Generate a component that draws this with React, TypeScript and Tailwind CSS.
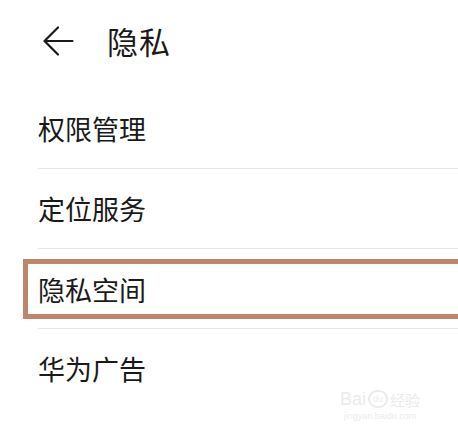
import React from "react";

const items = ["权限管理", "定位服务", "隐私空间", "华为广告"];

const font = { fontFamily: '"Noto Sans CJK SC", "Noto Sans", sans-serif' };

export default function App() {
  return (
    <div className="relative w-[458px] h-[435px] bg-white overflow-hidden text-[#1a1a1a]" style={font}>
      {/* header */}
      <div className="h-[89px] flex items-center pl-[43px] pb-[8px]">
        <svg width="31" height="30" viewBox="0 0 31 30" fill="none" stroke="#1a1a1a" strokeWidth="2.2" strokeLinecap="round" strokeLinejoin="round">
          <path d="M29.5 15H2" />
          <path d="M15 1.5L1.5 15L15 28.5" />
        </svg>
        <div className="ml-[33px] text-[31px] leading-none tracking-[1px]">隐私</div>
      </div>

      {/* list */}
      <div className="flex flex-col">
        {items.map((item, i) => (
          <div key={item} className="flex flex-col">
            {i === 2 ? (
              <div className="h-[79px] py-[10px] pl-[23px]">
                <div className="h-[60px] border-[5px] border-[#c0846a] -mr-[10px] pl-[10px] flex items-center text-[27px] leading-none">
                  {item}
                </div>
              </div>
            ) : (
              <div className="h-[79px] pl-[38px] flex items-center text-[27px] leading-none">{item}</div>
            )}
            {i < 3 && <div className="ml-[38px] h-px bg-[#e6e6e6]" />}
          </div>
        ))}
      </div>

      {/* watermark */}
      <div className="absolute left-[340px] top-[390px] flex flex-col items-center text-[#ebebeb] select-none">
        <div className="flex items-center gap-[2px] text-[18px] leading-none" style={{ fontFamily: '"Liberation Sans", sans-serif' }}>
          <span>Bai</span>
          <span className="w-[20px] h-[18px] rounded-full border-2 border-[#ebebeb] text-[9px] flex items-center justify-center">du</span>
          <span className="text-[15px]" style={font}>经验</span>
        </div>
        <div className="text-[9px] leading-none mt-[4px]" style={{ fontFamily: '"Liberation Sans", sans-serif' }}>jingyan.baidu.com</div>
      </div>
    </div>
  );
}
